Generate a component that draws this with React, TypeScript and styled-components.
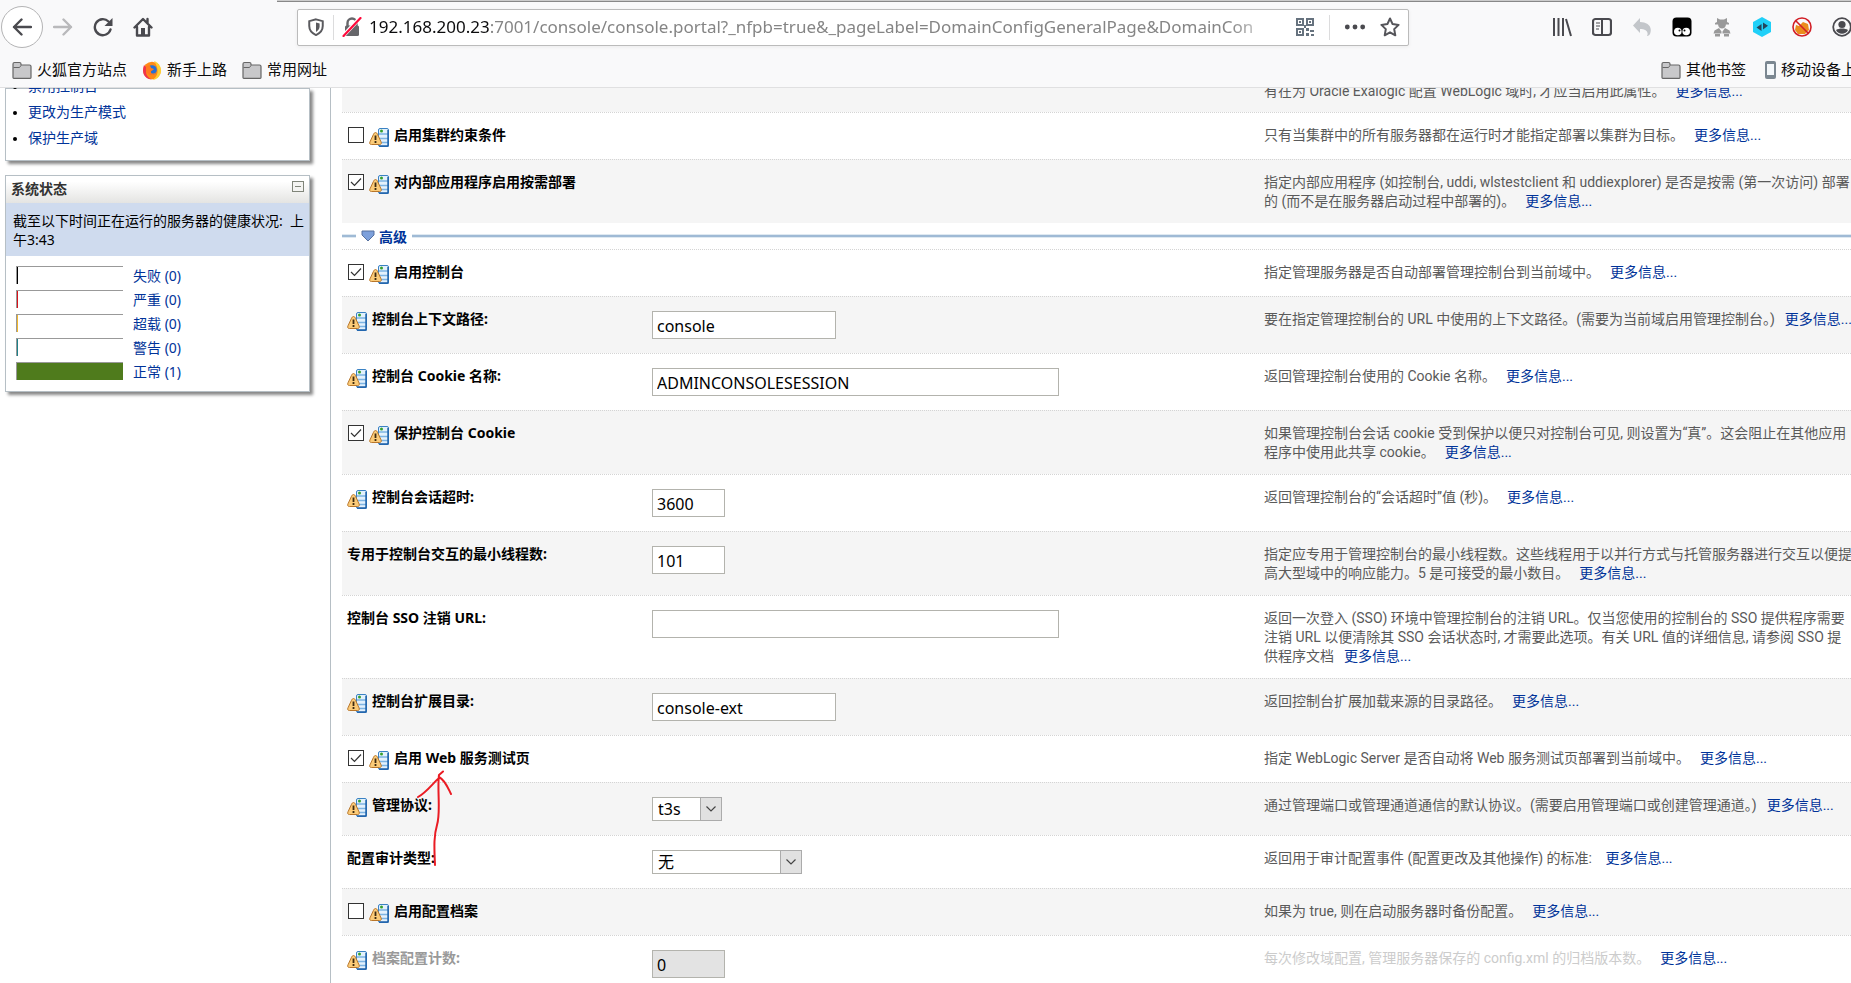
import React from 'react';
import styled, { createGlobalStyle, css } from 'styled-components';

const uiFont = '"Noto Sans", "Noto Sans CJK SC", sans-serif';
const helpFont = 'Roboto, "Noto Sans CJK SC", sans-serif';

const GlobalStyle = createGlobalStyle`
  *, *::before, *::after { box-sizing: border-box; }
  html, body, #root { height: 100%; }
  body { margin: 0; overflow: hidden; background: #fff; color: #000; font: 14px/19px ${uiFont}; }
  a { color: #039; text-decoration: none; }
  button { border: 0; padding: 0; background: none; }
`;

const Window = styled.div`
  height: 100%;
  display: flex;
  flex-direction: column;
  overflow: hidden;
`;

const Chrome = styled.header`
  flex: none;
  background: #f9f9fa;
  border-bottom: 1px solid #e0e0e1;
`;

const TabEdge = styled.div`
  height: 2px;
  margin-left: 277px;
  background: #ccc;
  border-bottom: 1px solid #888;
`;

const NavBar = styled.nav`
  display: flex;
  align-items: center;
  height: 50px;
  overflow: hidden;
`;

const NavButton = styled.button<{ $round?: boolean }>`
  flex: none;
  display: flex;
  align-items: center;
  justify-content: center;
  width: 40px;
  height: 40px;
  ${(p) => p.$round && css`
    width: 42px;
    height: 42px;
    margin-left: 1px;
    border: 1px solid #b4b4b5;
    border-radius: 50%;
    background: #fff;
  `}
`;

const UrlBox = styled.div`
  flex: 1;
  min-width: 0;
  display: flex;
  align-items: center;
  height: 37px;
  margin: 0 133px 0 134px;
  background: #fff;
  border: 1px solid #bbb;
  border-radius: 2px;
  box-shadow: 0 1px 4px rgba(0, 0, 0, 0.06);
`;

const UrlIcon = styled.span<{ $w: number }>`
  flex: none;
  display: flex;
  align-items: center;
  justify-content: center;
  width: ${(p) => p.$w}px;
`;

const Divider = styled.span`
  flex: none;
  width: 1px;
  height: 25px;
  background: #dcdcdd;
`;

const UrlText = styled.div`
  flex: 1;
  min-width: 0;
  overflow: hidden;
  white-space: nowrap;
  font-size: 17px;
  line-height: 24px;
  color: #858585;
  mask-image: linear-gradient(to left, transparent, #000 50px);
  b { font-weight: 400; color: #0c0c0d; }
`;

const Tools = styled.div`
  flex: none;
  display: flex;
  width: 309px;
  overflow: hidden;
`;

const Bookmarks = styled.div`
  display: flex;
  justify-content: space-between;
  height: 35px;
  padding: 0 0 0 12px;
  overflow: hidden;
`;

const BookmarkGroup = styled.div<{ $end?: boolean }>`
  flex: none;
  display: flex;
  align-items: center;
  gap: 15px;
  ${(p) => p.$end && css`width: 190px;`}
`;

const Bookmark = styled.a`
  flex: none;
  display: flex;
  align-items: center;
  gap: 5px;
  font-size: 15px;
  color: #0c0c0d;
  white-space: nowrap;
`;

const Page = styled.div`
  flex: 1;
  min-height: 0;
  display: flex;
  overflow: hidden;
`;

const Side = styled.aside`
  flex: none;
  width: 330px;
  padding: 0 20px 0 5px;
`;

const Panel = styled.section`
  margin-bottom: 14px;
  border: 1px solid #b6bfc5;
  background: #fff;
  box-shadow: 3px 3px 3px #888;
`;

const TaskList = styled.ul`
  margin: -16px 0 0;
  padding: 0 0 9px 22px;
  line-height: 26px;
  li::marker { font-size: 12px; }
`;

const PanelHead = styled.h2`
  display: flex;
  justify-content: space-between;
  align-items: center;
  height: 27px;
  margin: 0;
  padding: 0 5px 2px;
  font-size: 14px;
  color: #333;
  background: linear-gradient(#fff 20%, #e4e4e2);
`;

const Collapse = styled.button`
  width: 12px;
  height: 11px;
  margin-bottom: 4px;
  border: 1px solid #80857a;
  background: linear-gradient(#80857a, #80857a) center / 6px 1px no-repeat #f4f4f2;
`;

const Health = styled.p`
  margin: 0;
  padding: 8px 7px;
  height: 53px;
  white-space: nowrap;
  background: #cfdbee;
`;

const Meters = styled.table`
  margin: 10px 10px 5px;
  border-spacing: 0;
  td { height: 24px; padding: 0 10px 0 0; vertical-align: top; }
`;

const Meter = styled.div<{ $color: string; $full?: boolean }>`
  width: 107px;
  height: 18px;
  border-top: 1px solid #999;
  border-left: 1px solid #999;
  background: linear-gradient(${(p) => p.$color}, ${(p) => p.$color}) left / ${(p) => (p.$full ? '100%' : '1px')} 100% no-repeat;
`;

const Main = styled.main`
  flex: 1;
  min-width: 0;
  padding-left: 11px;
  border-left: 1px solid #b6bfc5;
  overflow: hidden;
`;

const Row = styled.div<{ $shade?: boolean }>`
  display: grid;
  grid-template-columns: 310px minmax(0, 612fr) minmax(0, 587fr);
  align-items: start;
  padding: 12px 0 13px;
  border-top: 1px dotted #d4d4d4;
  background: ${(p) => (p.$shade ? '#f5f5f5' : '#fff')};
`;

const FirstRow = styled(Row)`
  height: 24px;
  align-items: end;
  align-content: end;
  border-top: 0;
  padding: 0 0 12px;
`;

const Name = styled.div<{ $off?: boolean }>`
  position: relative;
  display: flex;
  align-items: flex-start;
  height: 21px;
  padding-left: 5px;
  font-weight: 700;
  white-space: nowrap;
  color: ${(p) => (p.$off ? '#999' : '#000')};
`;

const Check = styled.input`
  appearance: none;
  width: 16px;
  height: 16px;
  margin: 2px 5px 0 1px;
  border: 1px solid #333;
  background: #fff;
  &:checked {
    background: #fff url("data:image/svg+xml,%3Csvg xmlns='http://www.w3.org/2000/svg' viewBox='0 0 14 14'%3E%3Cpath d='M2 7l3.500 3.500L12 3.500' fill='none' stroke='%23333' stroke-width='1.200'/%3E%3C/svg%3E") center / 14px 14px;
  }
`;

const field = css`
  display: block;
  margin: 2px 0 1px;
  border: 1px solid #b3b3ad;
  border-radius: 0;
  background: #fff;
  color: #000;
  font-family: ${uiFont};
  font-size: 16px;
`;

const Field = styled.input<{ $w: number }>`
  ${field}
  width: ${(p) => p.$w}px;
  height: 28px;
  padding: 1px 4px 0;
  &:disabled { background: #e3e3e3; }
`;

const SelectWrap = styled.div<{ $w: number }>`
  position: relative;
  display: flow-root;
  width: ${(p) => p.$w}px;
`;

const Select = styled.select`
  ${field}
  appearance: none;
  width: 100%;
  height: 24px;
  padding: 0 5px;
  line-height: 22px;
`;

const SelectArrow = styled.span`
  position: absolute;
  top: 2px;
  right: 0;
  display: flex;
  align-items: center;
  justify-content: center;
  width: 22px;
  height: 24px;
  border: 1px solid #ababab;
  background: #e1e1e1;
  pointer-events: none;
`;

const Help = styled.p<{ $off?: boolean }>`
  margin: 1px 0 -1px;
  font-family: ${helpFont};
  white-space: nowrap;
  color: ${(p) => (p.$off ? '#ccc' : '#5a5a5a')};
  a { margin-left: 10px; }
`;

const Advanced = styled.div`
  display: flex;
  align-items: center;
  gap: 5px;
  height: 26px;
  font-weight: 700;
  &::before, &::after {
    content: '';
    height: 4px;
    border: solid #dfe9f1;
    border-width: 1px 0;
    background: #9fbad5;
  }
  &::before { width: 14px; }
  &::after { flex: 1; }
  a { display: flex; align-items: center; gap: 4px; }
`;

const Pen = styled.svg`
  position: absolute;
  left: 75px;
  top: 22px;
  z-index: 1;
  pointer-events: none;
`;

const NameLabel = styled.label<{ $icon?: boolean }>`
  margin-left: ${(p) => (p.$icon ? 5 : 0)}px;
`;

const ServerSvg = styled.svg`
  flex: none;
  margin-top: 3px;
`;

const Svg = ({ size = 20, children }: { size?: number; children: React.ReactNode }) => (
  <svg width={size} height={size} viewBox="0 0 20 20" fill="none" aria-hidden="true">{children}</svg>
);

const ServerIcon = () => (
  <ServerSvg width="20" height="19" viewBox="0 0 20 19" aria-hidden="true">
    <rect x="9.500" y="0.500" width="10" height="18" rx="1.500" fill="#e3f1fc" stroke="#3b82c4" />
    <path d="M10 6h9M10 10.500h9M10 14.500h9" stroke="#7db4e2" strokeWidth="1.500" />
    <path d="M19 2v16H10" fill="none" stroke="#1c5fa8" strokeWidth="1.400" />
    <circle cx="12.500" cy="3" r="1.500" fill="#36a02e" />
    <path d="M6.500 4.500c1 0 1.500.8 2 1.800l3.500 7.500c.7 1.600.3 2.700-1.500 2.700h-8c-1.800 0-2.200-1.100-1.500-2.700l3.500-7.500c.5-1 1-1.800 2-1.800z" fill="#fbcb78" stroke="#b8762a" />
    <path d="M6.500 7.500v4.500M6.500 13v2" stroke="#3d2a10" strokeWidth="1.800" />
  </ServerSvg>
);

const Folder = () => (
  <Svg>
    <path d="M1 17.500V4q0-1.500 1.500-1.500h5Q9 2.500 9 4v1h8.500Q19 5 19 6.500v11q0 .8-.8.800H1.800Q1 18.300 1 17.500z" fill="#c8c8ca" stroke="#666" strokeWidth="1.200" />
    <path d="M1.500 7.500h6L9 5.500" stroke="#666" />
  </Svg>
);

const Firefox = () => (
  <Svg>
    <circle cx="10" cy="10.500" r="8.800" fill="#ff8a16" />
    <path d="M12 1c5 2 7.500 6 7 11-1 5-5 8-9 8 6-3 8-10 2-19z" fill="#ffcf33" />
    <path d="M2 5c-3 8 1 14 8 14.500C4 17 3 12 5 8z" fill="#f0354b" />
    <circle cx="10" cy="10" r="4.800" fill="#2470d8" />
    <path d="M4 6c3-1 5 0 5 2l3 1c-1 2-3 1-3 3s3 2 5 0c-2 5-9 4-10-2z" fill="#ff7a1c" />
  </Svg>
);

const More = () => <a href="#more">更多信息...</a>;

type Item = {
  id: string;
  label: string;
  kind: 'check' | 'text' | 'select';
  icon?: boolean;
  value?: string;
  width?: number;
  checked?: boolean;
  off?: boolean;
  arrow?: boolean;
  help: string[];
};

const before: Item[] = [
  { id: 'cluster', label: '启用集群约束条件', kind: 'check', icon: true, help: ['只有当集群中的所有服务器都在运行时才能指定部署以集群为目标。'] },
  { id: 'ondemand', label: '对内部应用程序启用按需部署', kind: 'check', icon: true, checked: true, help: ['指定内部应用程序 (如控制台, uddi, wlstestclient 和 uddiexplorer) 是否是按需 (第一次访问) 部署', '的 (而不是在服务器启动过程中部署的)。'] },
];

const after: Item[] = [
  { id: 'console', label: '启用控制台', kind: 'check', icon: true, checked: true, help: ['指定管理服务器是否自动部署管理控制台到当前域中。'] },
  { id: 'path', label: '控制台上下文路径:', kind: 'text', icon: true, value: 'console', width: 184, help: ['要在指定管理控制台的 URL 中使用的上下文路径。(需要为当前域启用管理控制台。)'] },
  { id: 'cookie', label: '控制台 Cookie 名称:', kind: 'text', icon: true, value: 'ADMINCONSOLESESSION', width: 407, help: ['返回管理控制台使用的 Cookie 名称。'] },
  { id: 'protect', label: '保护控制台 Cookie', kind: 'check', icon: true, checked: true, help: ['如果管理控制台会话 cookie 受到保护以便只对控制台可见, 则设置为“真”。这会阻止在其他应用', '程序中使用此共享 cookie。'] },
  { id: 'timeout', label: '控制台会话超时:', kind: 'text', icon: true, value: '3600', width: 73, help: ['返回管理控制台的“会话超时”值 (秒)。'] },
  { id: 'threads', label: '专用于控制台交互的最小线程数:', kind: 'text', value: '101', width: 73, help: ['指定应专用于管理控制台的最小线程数。这些线程用于以并行方式与托管服务器进行交互以便提', '高大型域中的响应能力。5 是可接受的最小数目。'] },
  { id: 'sso', label: '控制台 SSO 注销 URL:', kind: 'text', value: '', width: 407, help: ['返回一次登入 (SSO) 环境中管理控制台的注销 URL。仅当您使用的控制台的 SSO 提供程序需要', '注销 URL 以便清除其 SSO 会话状态时, 才需要此选项。有关 URL 值的详细信息, 请参阅 SSO 提', '供程序文档'] },
  { id: 'ext', label: '控制台扩展目录:', kind: 'text', icon: true, value: 'console-ext', width: 184, help: ['返回控制台扩展加载来源的目录路径。'] },
  { id: 'webtest', label: '启用 Web 服务测试页', kind: 'check', icon: true, checked: true, arrow: true, help: ['指定 WebLogic Server 是否自动将 Web 服务测试页部署到当前域中。'] },
  { id: 'protocol', label: '管理协议:', kind: 'select', icon: true, value: 't3s', width: 70, help: ['通过管理端口或管理通道通信的默认协议。(需要启用管理端口或创建管理通道。)'] },
  { id: 'audit', label: '配置审计类型:', kind: 'select', value: '无', width: 150, help: ['返回用于审计配置事件 (配置更改及其他操作) 的标准: '] },
  { id: 'archive', label: '启用配置档案', kind: 'check', icon: true, help: ['如果为 true, 则在启动服务器时备份配置。'] },
  { id: 'count', label: '档案配置计数:', kind: 'text', icon: true, value: '0', width: 73, off: true, help: ['每次修改域配置, 管理服务器保存的 config.xml 的归档版本数。'] },
];

const FormRow = ({ item, shade }: { item: Item; shade: boolean }) => (
  <Row $shade={shade}>
    <Name $off={item.off}>
      {item.kind === 'check' && <Check type="checkbox" id={item.id} defaultChecked={item.checked} />}
      {item.icon && <ServerIcon />}
      <NameLabel htmlFor={item.id} $icon={item.icon}>{item.label}</NameLabel>
      {item.arrow && (
        <Pen width="36" height="98" viewBox="0 0 36 98" fill="none" aria-hidden="true">
          <path d="M18 95C17 75 17 65 20 55C24 42 20 20 22 5L26 1.500M22 8C15 14 10 22 1 27M22 7C28 10 31 18 34 24" stroke="#ea1c24" strokeWidth="2" strokeLinecap="round" />
        </Pen>
      )}
    </Name>
    <div>
      {item.kind === 'text' && <Field id={item.id} $w={item.width!} defaultValue={item.value} disabled={item.off} />}
      {item.kind === 'select' && (
        <SelectWrap $w={item.width!}>
          <Select id={item.id}><option>{item.value}</option></Select>
          <SelectArrow><svg width="12" height="8" viewBox="0 0 12 8" fill="none"><path d="M1.500 1.500L6 6l4.500-4.500" stroke="#444" strokeWidth="1.200" /></svg></SelectArrow>
        </SelectWrap>
      )}
    </div>
    <Help $off={item.off}>
      {item.help.map((line, i) => (
        <React.Fragment key={line}>{i > 0 && <br />}{line}</React.Fragment>
      ))}
      <More />
    </Help>
  </Row>
);

const meters = [
  { label: '失败 (0)', color: '#000' },
  { label: '严重 (0)', color: '#d8121a' },
  { label: '超载 (0)', color: '#f0b62c' },
  { label: '警告 (0)', color: '#1d8189' },
  { label: '正常 (1)', color: '#4f7b1c', full: true },
];

export default function App() {
  return (
    <Window>
      <GlobalStyle />
      <Chrome>
        <TabEdge />
        <NavBar>
          <NavButton $round aria-label="后退"><Svg><path d="M19 10H2M9.500 2.500L2 10l7.500 7.500" stroke="#4a4a4f" strokeWidth="2.400" strokeLinecap="round" strokeLinejoin="round" /></Svg></NavButton>
          <NavButton aria-label="前进"><Svg><path d="M1 10h17M10.500 2.500L18 10l-7.500 7.500" stroke="#b9b9bb" strokeWidth="2.400" strokeLinecap="round" strokeLinejoin="round" /></Svg></NavButton>
          <NavButton aria-label="刷新"><Svg><path d="M17.500 12.500A8 8 0 1 1 15.500 4.500" stroke="#4a4a4f" strokeWidth="2.400" strokeLinecap="round" /><path d="M19.500 1v8h-8z" fill="#4a4a4f" /></Svg></NavButton>
          <NavButton aria-label="主页"><Svg><path d="M1.500 10.500L10 2l8.500 8.500M4 10v8.500h12V10M14.500 2v4" stroke="#4a4a4f" strokeWidth="2.400" strokeLinecap="round" strokeLinejoin="round" /><rect x="8" y="11" width="4" height="7" fill="#4a4a4f" /></Svg></NavButton>
          <UrlBox>
            <UrlIcon $w={35}><Svg size={18}><path d="M10 1.500l7.500 2V9c0 5-3 8-7.500 10C5.500 17 2.500 14 2.500 9V3.500z" stroke="#5a5a5e" strokeWidth="2.200" /><path d="M10 5l4 1v3.500c0 2.500-1.500 4.500-4 6z" fill="#5a5a5e" /></Svg></UrlIcon>
            <Divider />
            <UrlIcon $w={35}><Svg><path d="M5.500 9V6a4.500 4.500 0 0 1 9 0v3" stroke="#66666a" strokeWidth="2.400" /><rect x="3" y="8.500" width="14" height="10.500" rx="1.500" fill="#66666a" /><path d="M1 19L18 1" stroke="#fff" strokeWidth="4" /><path d="M1.500 19L18.500 1" stroke="#ff0a3c" strokeWidth="2.200" strokeLinecap="round" /></Svg></UrlIcon>
            <UrlText><b>192.168.200.23</b>:7001/console/console.portal?_nfpb=true&amp;_pageLabel=DomainConfigGeneralPage&amp;DomainCon</UrlText>
            <UrlIcon $w={49}><Svg><path d="M2 2h6v6H2zM12 2h6v6h-6zM2 12h6v6H2z" stroke="#66727e" strokeWidth="2" /><path d="M4 4h2v2H4zM14 4h2v2h-2zM4 14h2v2H4zM11 11h3v3h-3zM15 13h4v2h-4zM11 16h3v3h-3zM16 17h3v2h-3zM9 8h2v3H9z" fill="#66727e" /></Svg></UrlIcon>
            <Divider />
            <UrlIcon $w={50}><Svg size={22}><circle cx="3" cy="10" r="2.200" fill="#4a4a4f" /><circle cx="10" cy="10" r="2.200" fill="#4a4a4f" /><circle cx="17" cy="10" r="2.200" fill="#4a4a4f" /></Svg></UrlIcon>
            <UrlIcon $w={20}><Svg><path d="M10 1.500l2.600 5.600 6 .8-4.400 4.200 1.100 6.200L10 15.300l-5.300 3 1.100-6.200L1.400 7.900l6-.8z" stroke="#55555a" strokeWidth="2" strokeLinejoin="round" /></Svg></UrlIcon>
            <UrlIcon $w={8} />
          </UrlBox>
          <Tools>
            <NavButton aria-label="书架"><Svg><path d="M2 1v18M6.500 1v18M11 1v18M14 2l5 17" stroke="#4a4a4f" strokeWidth="2" /></Svg></NavButton>
            <NavButton aria-label="侧栏"><Svg><rect x="1" y="2" width="18" height="16" rx="2.500" stroke="#4a4a4f" strokeWidth="2.200" /><path d="M10 2v16" stroke="#4a4a4f" strokeWidth="2" /><path d="M4 6h4M4 9h4M4 12h3" stroke="#4a4a4f" /></Svg></NavButton>
            <NavButton aria-label="撤销"><Svg><path d="M8 1v4c7 0 13 4 10 12-1 1.500-2 2-3 2 2-4-1-7-7-7v4L1 8.500z" fill="#c3c6ca" /></Svg></NavButton>
            <NavButton aria-label="脚本"><Svg><rect x="0.500" y="0.500" width="19" height="19" rx="4" fill="#000" /><circle cx="5.800" cy="14.500" r="3.800" fill="#fff" /><circle cx="14.200" cy="14.500" r="3.800" fill="#fff" /><circle cx="7.500" cy="13.500" r="1" fill="#000" /><circle cx="12.500" cy="13.500" r="1" fill="#000" /></Svg></NavButton>
            <NavButton aria-label="代理"><Svg><path d="M5 1l3 1.500h4L15 1v4l2 1v1.500H3V6l2-1zM6 7h8c0 3-2 4.500-4 4.500S6 10 6 7zM2.500 13.500L7 11l2.500 3.500v2h-8zM17.500 13.500L13 11l-2.500 3.500v2h8zM3 17h5v2.500H3zM12 17h5v2.500h-5z" fill="#999" /></Svg></NavButton>
            <NavButton aria-label="网络"><Svg><path d="M10 0l9 5v10l-9 5-9-5V5z" fill="#20d0f8" /><path d="M9.500 7v7L4.500 10.500zM11 5.500v7l5-3.800z" fill="#23465c" /></Svg></NavButton>
            <NavButton aria-label="禁用"><Svg><path d="M4 8l3 1 4-4 5 2 1 6-4 4H6l-3-4z" fill="#eb8c1c" /><circle cx="10" cy="10" r="9" stroke="#d21f26" strokeWidth="1.600" /><path d="M3.500 3.500l13 13" stroke="#d21f26" strokeWidth="1.600" /></Svg></NavButton>
            <NavButton aria-label="帐户"><Svg><circle cx="10" cy="10" r="8.800" stroke="#4a4a4f" strokeWidth="1.800" /><circle cx="10" cy="7.500" r="3.600" fill="#4a4a4f" /><path d="M4 13c3-2 9-2 12 0-2 5-10 5-12 0z" fill="#4a4a4f" /></Svg></NavButton>
          </Tools>
        </NavBar>
        <Bookmarks>
          <BookmarkGroup>
            <Bookmark href="#a"><Folder />火狐官方站点</Bookmark>
            <Bookmark href="#b"><Firefox />新手上路</Bookmark>
            <Bookmark href="#c"><Folder />常用网址</Bookmark>
          </BookmarkGroup>
          <BookmarkGroup $end>
            <Bookmark href="#d"><Folder />其他书签</Bookmark>
            <Bookmark href="#e"><svg width="15" height="20" viewBox="0 0 15 20"><rect x="4" y="1" width="11" height="18" rx="2" fill="#7b8791" /><rect x="6" y="4" width="7" height="11" fill="#f4f8fb" /></svg>移动设备上</Bookmark>
          </BookmarkGroup>
        </Bookmarks>
      </Chrome>
      <Page>
        <Side>
          <Panel>
            <TaskList>
              <li><a href="#t1">禁用控制台</a></li>
              <li><a href="#t2">更改为生产模式</a></li>
              <li><a href="#t3">保护生产域</a></li>
            </TaskList>
          </Panel>
          <Panel>
            <PanelHead>系统状态<Collapse aria-label="折叠" /></PanelHead>
            <Health>截至以下时间正在运行的服务器的健康状况:&nbsp; 上<br />午3:43</Health>
            <Meters>
              <tbody>
                {meters.map((m) => (
                  <tr key={m.label}>
                    <td><Meter $color={m.color} $full={m.full} /></td>
                    <td><a href="#s">{m.label}</a></td>
                  </tr>
                ))}
              </tbody>
            </Meters>
          </Panel>
        </Side>
        <Main>
          <FirstRow $shade>
            <span />
            <span />
            <Help>有在为 Oracle Exalogic 配置 WebLogic 域时, 才应当启用此属性。<More /></Help>
          </FirstRow>
          {before.map((item, i) => <FormRow key={item.id} item={item} shade={i % 2 === 1} />)}
          <Advanced><a href="#adv"><svg width="14" height="12" viewBox="0 0 14 12"><path d="M1 1h12v4L7 11 1 5z" fill="#7da0db" stroke="#56719f" /></svg>高级</a></Advanced>
          {after.map((item, i) => <FormRow key={item.id} item={item} shade={i % 2 === 1} />)}
        </Main>
      </Page>
    </Window>
  );
}
